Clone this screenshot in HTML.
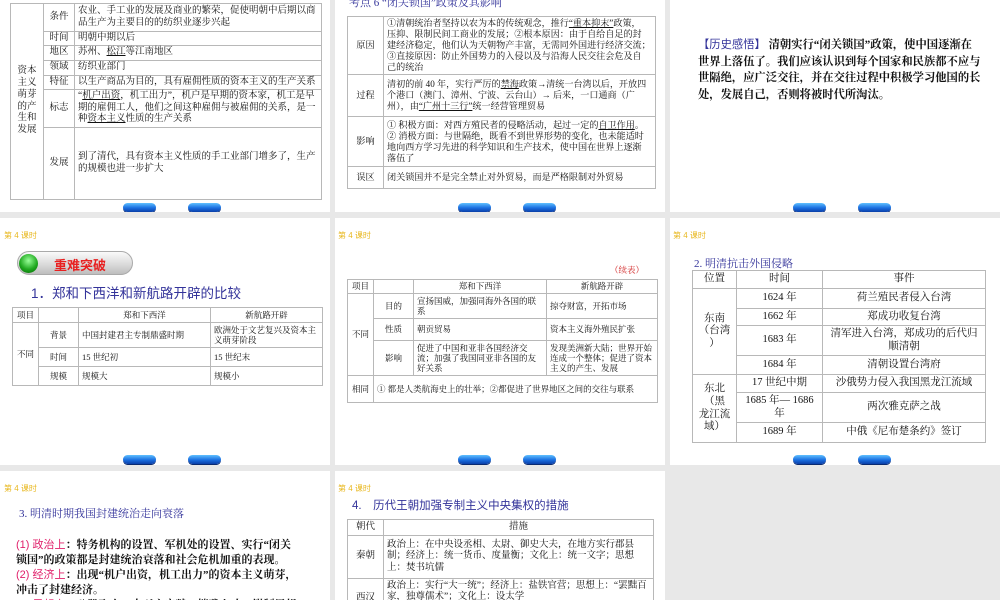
<!DOCTYPE html>
<html><head><meta charset="utf-8">
<style>
*{margin:0;padding:0;box-sizing:border-box}
body{width:1000px;height:600px;background:#e8e8e8;position:relative;overflow:hidden;font-family:"Liberation Serif","Noto Serif CJK SC","Noto Sans CJK SC",serif;color:#111}
.s{position:absolute;background:#fff;overflow:hidden}
.a{position:absolute;white-space:nowrap}
table{position:absolute;border-collapse:collapse;table-layout:fixed}
td{border:1px solid #b8b8b8;padding:0 3px;vertical-align:middle;line-height:1.2}
.c{text-align:center}
.k{font-size:8px;color:#e8b820;position:absolute;font-family:"Liberation Sans","Noto Sans CJK SC",sans-serif}
.btn{position:absolute;width:33px;height:9px;border-radius:5px;background:linear-gradient(#5fc0ff,#1a6ee0 55%,#0a3fa8);box-shadow:0 1px 0 #0a2a70}
.blue{color:#33339a}
u{text-decoration:underline}
.sans{font-family:"Liberation Sans","Noto Sans CJK SC",sans-serif}
</style></head><body>

<!-- Slide 1 -->
<div class="s" style="left:0;top:0;width:330px;height:212px">
<table style="left:10px;top:3px;width:312px;font-size:9.5px">
<colgroup><col style="width:33px"><col style="width:31px"><col></colgroup>
<tr style="height:28px"><td rowspan="7" class="c" style="line-height:1.25">资本<br>主义<br>萌芽<br>的产<br>生和<br>发展</td><td class="c">条件</td><td>农业、手工业的发展及商业的繁荣，促使明朝中后期以商品生产为主要目的的纺织业逐步兴起</td></tr>
<tr style="height:14px"><td class="c">时间</td><td>明朝中期以后</td></tr>
<tr style="height:15px"><td class="c">地区</td><td>苏州、<u>松江</u>等江南地区</td></tr>
<tr style="height:15px"><td class="c">领域</td><td>纺织业部门</td></tr>
<tr style="height:14px"><td class="c">特征</td><td>以生产商品为目的，具有雇佣性质的资本主义的生产关系</td></tr>
<tr style="height:38px"><td class="c">标志</td><td>“<u>机户出资</u>，机工出力”，机户是早期的资本家，机工是早期的雇佣工人，他们之间这种雇佣与被雇佣的关系，是一种<u>资本主义</u>性质的生产关系</td></tr>
<tr style="height:72px"><td class="c">发展</td><td>到了清代，具有资本主义性质的手工业部门增多了，生产的规模也进一步扩大</td></tr>
</table>
<div class="btn" style="left:123px;top:203px"></div><div class="btn" style="left:188px;top:203px"></div>
</div>

<!-- Slide 2 -->
<div class="s" style="left:335px;top:0;width:330px;height:212px">
<div class="a blue" style="left:14px;top:-6px;font-size:11px">考点 6 “闭关锁国”政策及其影响</div>
<table style="left:12px;top:16px;width:309px;font-size:9.1px">
<colgroup><col style="width:36px"><col></colgroup>
<tr style="height:58px"><td class="c">原因</td><td style="white-space:nowrap;line-height:11px">①清朝统治者坚持以农为本的传统观念，推行<u>“重本抑末”</u>政策，<br>压抑、限制民间工商业的发展；②根本原因：由于自给自足的封<br>建经济稳定，他们认为天朝物产丰富，无需同外国进行经济交流；<br>③直接原因：防止外国势力的入侵以及与沿海人民交往会危及自<br>己的统治</td></tr>
<tr style="height:42px"><td class="c">过程</td><td style="white-space:nowrap;line-height:11px">清初的前 40 年，实行严厉的<u>禁海</u>政策→清统一台湾以后，开放四<br>个港口（澳门、漳州、宁波、云台山）→ 后来，一口通商（广<br>州），由<u>“广州十三行”</u>统一经营管理贸易</td></tr>
<tr style="height:50px"><td class="c">影响</td><td style="white-space:nowrap;line-height:11px">① 积极方面：对西方殖民者的侵略活动，起过一定的<u>自卫作用</u>。<br>② 消极方面：与世隔绝，既看不到世界形势的变化，也未能适时<br>地向西方学习先进的科学知识和生产技术，使中国在世界上逐渐<br>落伍了</td></tr>
<tr style="height:22px"><td class="c">误区</td><td>闭关锁国并不是完全禁止对外贸易，而是严格限制对外贸易</td></tr>
</table>
<div class="btn" style="left:123px;top:203px"></div><div class="btn" style="left:188px;top:203px"></div>
</div>

<!-- Slide 3 -->
<div class="s" style="left:670px;top:0;width:330px;height:212px">
<div class="a" style="left:28px;top:37px;font-size:11.3px;line-height:16.5px;font-weight:bold"><span class="blue sans" style="font-weight:normal">【历史感悟】</span> 清朝实行“闭关锁国”政策，使中国逐渐在<br>世界上落伍了。我们应该认识到每个国家和民族都不应与<br>世隔绝，应广泛交往，并在交往过程中积极学习他国的长<br>处，发展自己，否则将被时代所淘汰。</div>
<div class="btn" style="left:123px;top:203px"></div><div class="btn" style="left:188px;top:203px"></div>
</div>

<!-- Slide 4 -->
<div class="s" style="left:0;top:218px;width:330px;height:247px">
<div class="k" style="left:4px;top:12px">第 4 课时</div>
<div class="a" style="left:17px;top:33px;width:116px;height:24px;border-radius:12px;background:linear-gradient(#fafafa,#d8d8d8 60%,#bdbdbd);border:1px solid #aaa"></div>
<div class="a" style="left:19px;top:36px;width:19px;height:19px;border-radius:50%;background:radial-gradient(circle at 50% 35%,#9f9,#2a2 55%,#060)"></div>
<div class="a sans" style="left:54px;top:37px;font-size:13px;font-weight:bold;color:#e82020">重难突破</div>
<div class="a blue sans" style="left:31px;top:64px;font-size:13.5px">1．郑和下西洋和新航路开辟的比较</div>
<table style="left:12px;top:89px;width:311px;font-size:8.5px">
<colgroup><col style="width:26px"><col style="width:40px"><col style="width:132px"><col></colgroup>
<tr style="height:15px"><td class="c">项目</td><td></td><td class="c">郑和下西洋</td><td class="c">新航路开辟</td></tr>
<tr style="height:25px"><td rowspan="3" class="c">不同</td><td class="c">背景</td><td>中国封建君主专制鼎盛时期</td><td>欧洲处于文艺复兴及资本主义萌芽阶段</td></tr>
<tr style="height:19px"><td class="c">时间</td><td>15 世纪初</td><td>15 世纪末</td></tr>
<tr style="height:19px"><td class="c">规模</td><td>规模大</td><td>规模小</td></tr>
</table>
<div class="btn" style="left:123px;top:237px"></div><div class="btn" style="left:188px;top:237px"></div>
</div>

<!-- Slide 5 -->
<div class="s" style="left:335px;top:218px;width:330px;height:247px">
<div class="k" style="left:3px;top:12px">第 4 课时</div>
<div class="a" style="left:275px;top:46px;font-size:8.5px;color:#d02020">（续表）</div>
<table style="left:12px;top:61px;width:311px;font-size:8.5px">
<colgroup><col style="width:26px"><col style="width:40px"><col style="width:133px"><col></colgroup>
<tr style="height:14px"><td class="c">项目</td><td></td><td class="c">郑和下西洋</td><td class="c">新航路开辟</td></tr>
<tr style="height:25px"><td rowspan="3" class="c">不同</td><td class="c">目的</td><td>宣扬国威，加强同海外各国的联系</td><td>掠夺财富，开拓市场</td></tr>
<tr style="height:22px"><td class="c">性质</td><td>朝贡贸易</td><td>资本主义海外殖民扩张</td></tr>
<tr style="height:35px"><td class="c">影响</td><td>促进了中国和亚非各国经济交流；加强了我国同亚非各国的友好关系</td><td>发现美洲新大陆；世界开始连成一个整体；促进了资本主义的产生、发展</td></tr>
<tr style="height:27px"><td class="c">相同</td><td colspan="3">① 都是人类航海史上的壮举；②都促进了世界地区之间的交往与联系</td></tr>
</table>
<div class="btn" style="left:123px;top:237px"></div><div class="btn" style="left:188px;top:237px"></div>
</div>

<!-- Slide 6 -->
<div class="s" style="left:670px;top:218px;width:330px;height:247px">
<div class="k" style="left:3px;top:12px">第 4 课时</div>
<div class="a blue" style="left:24px;top:37px;font-size:11px">2. 明清抗击外国侵略</div>
<table style="left:22px;top:52px;width:294px;font-size:10.5px">
<colgroup><col style="width:44px"><col style="width:86px"><col></colgroup>
<tr style="height:18px"><td class="c">位置</td><td class="c">时间</td><td class="c">事件</td></tr>
<tr style="height:20px"><td rowspan="4" class="c">东南<br>（台湾<br>）</td><td class="c">1624 年</td><td class="c">荷兰殖民者侵入台湾</td></tr>
<tr style="height:17px"><td class="c">1662 年</td><td class="c">郑成功收复台湾</td></tr>
<tr style="height:30px"><td class="c">1683 年</td><td class="c">清军进入台湾，郑成功的后代归顺清朝</td></tr>
<tr style="height:19px"><td class="c">1684 年</td><td class="c">清朝设置台湾府</td></tr>
<tr style="height:18px"><td rowspan="3" class="c">东北<br>（黑<br>龙江流<br>域）</td><td class="c">17 世纪中期</td><td class="c">沙俄势力侵入我国黑龙江流域</td></tr>
<tr style="height:30px"><td class="c">1685 年— 1686 年</td><td class="c">两次雅克萨之战</td></tr>
<tr style="height:20px"><td class="c">1689 年</td><td class="c">中俄《尼布楚条约》签订</td></tr>
</table>
<div class="btn" style="left:123px;top:237px"></div><div class="btn" style="left:188px;top:237px"></div>
</div>

<!-- Slide 7 -->
<div class="s" style="left:0;top:471px;width:330px;height:129px">
<div class="k" style="left:4px;top:12px">第 4 课时</div>
<div class="a blue" style="left:19px;top:34px;font-size:11px">3. 明清时期我国封建统治走向衰落</div>
<div class="a" style="left:16px;top:67px;font-size:11px;line-height:15px;font-weight:bold"><span class="sans" style="color:#e0206a;font-weight:normal">(1) 政治上</span>：特务机构的设置、军机处的设置、实行“闭关<br>锁国”的政策都是封建统治衰落和社会危机加重的表现。<br><span class="sans" style="color:#e0206a;font-weight:normal">(2) 经济上</span>：出现“机户出资，机工出力”的资本主义萌芽，<br>冲击了封建经济。<br><span class="sans" style="color:#e0206a;font-weight:normal">(3) 思想上</span>：八股取士，大兴文字狱，摧残人才，钳制思想。</div>
</div>

<!-- Slide 8 -->
<div class="s" style="left:335px;top:471px;width:330px;height:129px">
<div class="k" style="left:3px;top:12px">第 4 课时</div>
<div class="a blue sans" style="left:17px;top:29px;font-size:11.5px;line-height:13px">4.　历代王朝加强专制主义中央集权的措施</div>
<table style="left:12px;top:48px;width:307px;font-size:9.5px">
<colgroup><col style="width:36px"><col></colgroup>
<tr style="height:16px"><td class="c">朝代</td><td class="c">措施</td></tr>
<tr style="height:43px"><td class="c">秦朝</td><td>政治上：在中央设丞相、太尉、御史大夫，在地方实行郡县制；经济上：统一货币、度量衡；文化上：统一文字；思想上：焚书坑儒</td></tr>
<tr style="height:40px"><td class="c">西汉</td><td style="vertical-align:top;padding-top:2px">政治上：实行“大一统”；经济上：盐铁官营；思想上：“罢黜百家，独尊儒术”；文化上：设太学</td></tr>
</table>
</div>

</body></html>
